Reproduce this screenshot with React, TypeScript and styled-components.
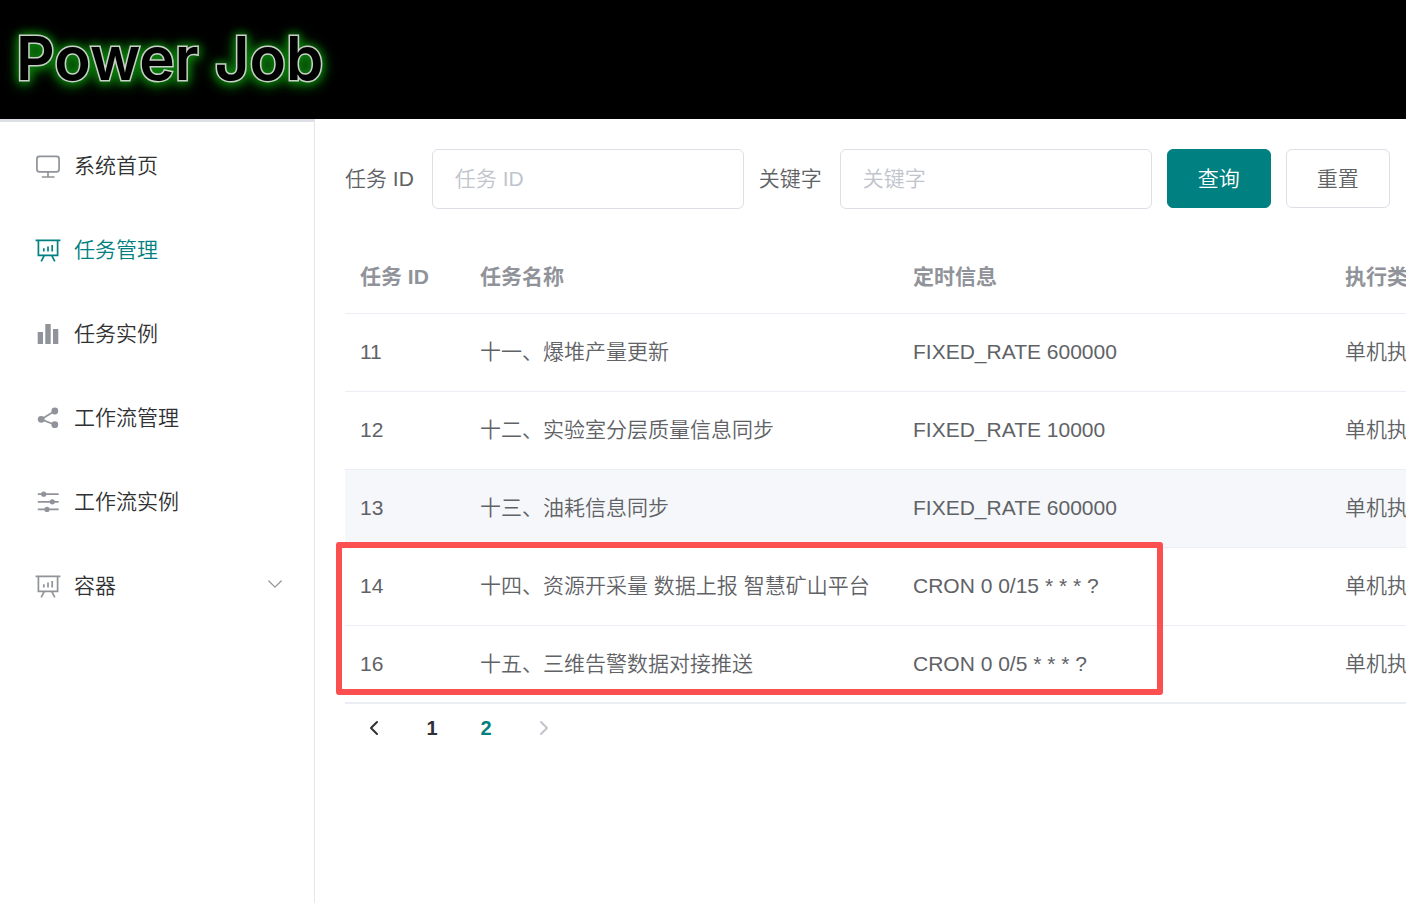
import React from 'react';
import styled, { createGlobalStyle } from 'styled-components';

const color = {
  primary: '#008080',
  heading: '#303133',
  text: '#606266',
  muted: '#909399',
  placeholder: '#c0c4cc',
  border: '#dcdfe6',
  line: '#ebeef5',
  hover: '#f5f7fa',
  mark: '#fc5050',
};

const GlobalStyle = createGlobalStyle`
  * { box-sizing: border-box; }
  body {
    margin: 0;
    background: #fff;
    color: ${color.text};
    font-family: "Liberation Sans", "Noto Sans CJK SC", sans-serif;
    font-size: 21px;
    font-weight: 350;
    line-height: 30px;
    overflow-x: hidden;
  }
  button, input { font: inherit; }
`;

const Page = styled.div`
  display: flex;
  flex-direction: column;
  min-height: 100vh;
`;

const Header = styled.header`
  display: flex;
  align-items: center;
  height: 119px;
  padding: 0 16px 4px;
  background: #000;
`;

const Logo = styled.a`
  display: flex;
  gap: 16px;
  color: #000;
  font-family: Inter, sans-serif;
  font-size: 60px;
  font-weight: 600;
  line-height: 112px;
  text-decoration: none;
  -webkit-text-stroke: 3px #c8d0c8;
  paint-order: stroke fill;
  filter: drop-shadow(0 0 4px #0a7a0a) drop-shadow(0 2px 6px #0a7a0a);
`;

const Body = styled.div`
  display: flex;
  flex: 1;
`;

const Sidebar = styled.nav`
  flex: 0 0 315px;
  padding-top: 2px;
  border-top: 3px solid ${color.border};
  border-right: 1px solid #e6e6e6;
`;

const Menu = styled.ul`
  margin: 0;
  padding: 0;
  list-style: none;
`;

const MenuLink = styled.a<{ $active?: boolean }>`
  display: flex;
  align-items: center;
  gap: 13px;
  height: 84px;
  padding: 0 30px 0 35px;
  color: ${(p) => (p.$active ? color.primary : color.heading)};
  text-decoration: none;

  > svg:first-child {
    color: ${(p) => (p.$active ? color.primary : color.muted)};
  }
`;

const MenuButton = styled(MenuLink).attrs({ as: 'button', type: 'button' })`
  width: 100%;
  border: 0;
  background: none;
  text-align: left;
`;

const MenuText = styled.span`
  flex: 1;
`;

const Icon = styled.svg`
  flex: none;
  width: 26px;
  height: 26px;
  fill: none;
  stroke: currentColor;
  stroke-width: 1.7;
`;

const Chevron = styled.svg`
  flex: none;
  width: 18px;
  height: 18px;
  fill: none;
  stroke: currentColor;
  stroke-linecap: round;
  stroke-linejoin: round;
`;

const ExpandChevron = styled(Chevron)`
  color: ${color.muted};
  stroke-width: 1.2;
`;

const Main = styled.main`
  flex: 1;
  min-width: 0;
  padding: 30px 0 30px 30px;
`;

const SearchForm = styled.form`
  display: flex;
  align-items: flex-start;
  gap: 15px;
  margin-bottom: 30px;
`;

const Field = styled.label`
  display: flex;
  align-items: center;
  gap: 18px;
  white-space: nowrap;
`;

const TextBox = styled.input`
  width: 312px;
  height: 60px;
  padding: 0 22px;
  border: 1px solid ${color.border};
  border-radius: 6px;
  background: #fff;
  color: ${color.text};

  &::placeholder {
    color: ${color.placeholder};
    opacity: 1;
  }
`;

const Button = styled.button<{ $primary?: boolean }>`
  flex: none;
  height: 59px;
  padding: 0 30px;
  border: 1px solid ${(p) => (p.$primary ? color.primary : color.border)};
  border-radius: 6px;
  background: ${(p) => (p.$primary ? color.primary : '#fff')};
  color: ${(p) => (p.$primary ? '#fff' : color.text)};
`;

const TableArea = styled.div`
  position: relative;
`;

const TableClip = styled.div`
  overflow: hidden;
`;

const Table = styled.table`
  width: 100%;
  min-width: 1480px;
  table-layout: fixed;
  border-collapse: separate;
  border-spacing: 0;
`;

const Col = styled.col<{ $width?: number }>`
  width: ${(p) => (p.$width ? `${p.$width}px` : 'auto')};
`;

const HeadCell = styled.th`
  height: 75px;
  padding: 2px 15px 0;
  border-bottom: 1px solid ${color.line};
  color: ${color.muted};
  font-weight: 700;
  text-align: left;
`;

const Cell = styled.td`
  height: 78px;
  padding: 0 15px 2px;
  border-bottom: 1px solid ${color.line};
  white-space: nowrap;
`;

const Row = styled.tr<{ $hovered?: boolean }>`
  background: ${(p) => (p.$hovered ? color.hover : '#fff')};

  &:last-child > td {
    padding-bottom: 0;
    border-bottom-width: 2px;
  }
`;

const Highlight = styled.div`
  position: absolute;
  left: -9px;
  bottom: 9px;
  width: 827px;
  height: 153px;
  border: 6px solid ${color.mark};
  border-radius: 3px;
  pointer-events: none;
`;

const Pagination = styled.nav`
  display: flex;
  gap: 4px;
  padding-left: 2px;
`;

const Pages = styled.div`
  display: flex;
`;

const PageButton = styled.button<{ $active?: boolean }>`
  display: flex;
  align-items: center;
  justify-content: center;
  width: 54px;
  height: 48px;
  padding: 0;
  border: 0;
  background: none;
  color: ${(p) => (p.$active ? color.primary : color.heading)};
  font-size: 20px;
  font-weight: 700;
  stroke-width: 2;

  &:disabled {
    color: ${color.placeholder};
  }
`;

const MonitorIcon = () => (
  <Icon viewBox="0 0 26 26" aria-hidden="true">
    <rect x="1.9" y="3.4" width="22.2" height="15.4" rx="2.6" />
    <path d="M13 18.8V24M6.8 24h12.8" />
  </Icon>
);

const BoardIcon = () => (
  <Icon viewBox="0 0 26 26" aria-hidden="true">
    <path d="M.6 3.4h24.8M3.4 3.4v15h19.2v-15M9.2 18.6l-3 5.8M16.8 18.6l3 5.8M8.8 11.2v3.2M13 9.6v4.8M17.2 8v6.4" />
  </Icon>
);

const BarsIcon = () => (
  <Icon viewBox="0 0 26 26" aria-hidden="true">
    <path
      d="M2.7 11H8v12H2.7zM10.3 3h5.4v20h-5.4zM18 8h5.3v15H18z"
      fill="currentColor"
      stroke="none"
    />
  </Icon>
);

const ShareIcon = () => (
  <Icon viewBox="0 0 26 26" aria-hidden="true">
    <path d="M19.8 6 6.2 14.3l13.6 5.4" />
    <g fill="currentColor" stroke="none">
      <circle cx="6.2" cy="14.3" r="3.4" />
      <circle cx="19.8" cy="6" r="3.4" />
      <circle cx="19.8" cy="19.7" r="3.4" />
    </g>
  </Icon>
);

const SlidersIcon = () => (
  <Icon viewBox="0 0 26 26" aria-hidden="true">
    <path d="M2.8 5.2h20.8M2.8 12.8h20.8M2.8 20.4h20.8" />
    <g fill="currentColor" stroke="none">
      <circle cx="8.7" cy="5.2" r="2.6" />
      <circle cx="17.3" cy="12.8" r="2.6" />
      <circle cx="12" cy="20.4" r="2.6" />
    </g>
  </Icon>
);

const menuItems = [
  { label: '系统首页', icon: MonitorIcon },
  { label: '任务管理', icon: BoardIcon, active: true },
  { label: '任务实例', icon: BarsIcon },
  { label: '工作流管理', icon: ShareIcon },
  { label: '工作流实例', icon: SlidersIcon },
];

const jobs = [
  { id: 11, name: '十一、爆堆产量更新', schedule: 'FIXED_RATE 600000' },
  { id: 12, name: '十二、实验室分层质量信息同步', schedule: 'FIXED_RATE 10000' },
  { id: 13, name: '十三、油耗信息同步', schedule: 'FIXED_RATE 600000', hovered: true },
  { id: 14, name: '十四、资源开采量 数据上报 智慧矿山平台', schedule: 'CRON 0 0/15 * * * ?' },
  { id: 16, name: '十五、三维告警数据对接推送', schedule: 'CRON 0 0/5 * * * ?' },
];

export default function App() {
  return (
    <>
      <GlobalStyle />
      <Page>
        <Header>
          <Logo href="#">
            <span>Power</span>
            <span>Job</span>
          </Logo>
        </Header>
        <Body>
          <Sidebar>
            <Menu>
              {menuItems.map(({ label, icon: ItemIcon, active }) => (
                <li key={label}>
                  <MenuLink href="#" $active={active}>
                    <ItemIcon />
                    <MenuText>{label}</MenuText>
                  </MenuLink>
                </li>
              ))}
              <li>
                <MenuButton aria-expanded="false">
                  <BoardIcon />
                  <MenuText>容器</MenuText>
                  <ExpandChevron viewBox="0 0 18 18" aria-hidden="true">
                    <path d="M2.8 4 9 10.2 15.2 4" />
                  </ExpandChevron>
                </MenuButton>
              </li>
            </Menu>
          </Sidebar>
          <Main>
            <SearchForm onSubmit={(e) => e.preventDefault()}>
              <Field>
                任务 ID
                <TextBox type="text" placeholder="任务 ID" />
              </Field>
              <Field>
                关键字
                <TextBox type="text" placeholder="关键字" />
              </Field>
              <Button type="submit" $primary>查询</Button>
              <Button type="reset">重置</Button>
            </SearchForm>
            <TableArea>
              <TableClip>
                <Table>
                  <colgroup>
                    <Col $width={120} />
                    <Col $width={433} />
                    <Col $width={432} />
                    <Col />
                  </colgroup>
                  <thead>
                    <tr>
                      <HeadCell>任务 ID</HeadCell>
                      <HeadCell>任务名称</HeadCell>
                      <HeadCell>定时信息</HeadCell>
                      <HeadCell>执行类型</HeadCell>
                    </tr>
                  </thead>
                  <tbody>
                    {jobs.map((job) => (
                      <Row key={job.id} $hovered={job.hovered}>
                        <Cell>{job.id}</Cell>
                        <Cell>{job.name}</Cell>
                        <Cell>{job.schedule}</Cell>
                        <Cell>单机执行</Cell>
                      </Row>
                    ))}
                  </tbody>
                </Table>
              </TableClip>
              <Highlight />
            </TableArea>
            <Pagination aria-label="分页">
              <PageButton type="button" aria-label="上一页">
                <Chevron viewBox="0 0 18 18" aria-hidden="true">
                  <path d="M12 3 6 9l6 6" />
                </Chevron>
              </PageButton>
              <Pages>
                <PageButton type="button">1</PageButton>
                <PageButton type="button" $active aria-current="page">2</PageButton>
              </Pages>
              <PageButton type="button" aria-label="下一页" disabled>
                <Chevron viewBox="0 0 18 18" aria-hidden="true">
                  <path d="m6 3 6 6-6 6" />
                </Chevron>
              </PageButton>
            </Pagination>
          </Main>
        </Body>
      </Page>
    </>
  );
}
